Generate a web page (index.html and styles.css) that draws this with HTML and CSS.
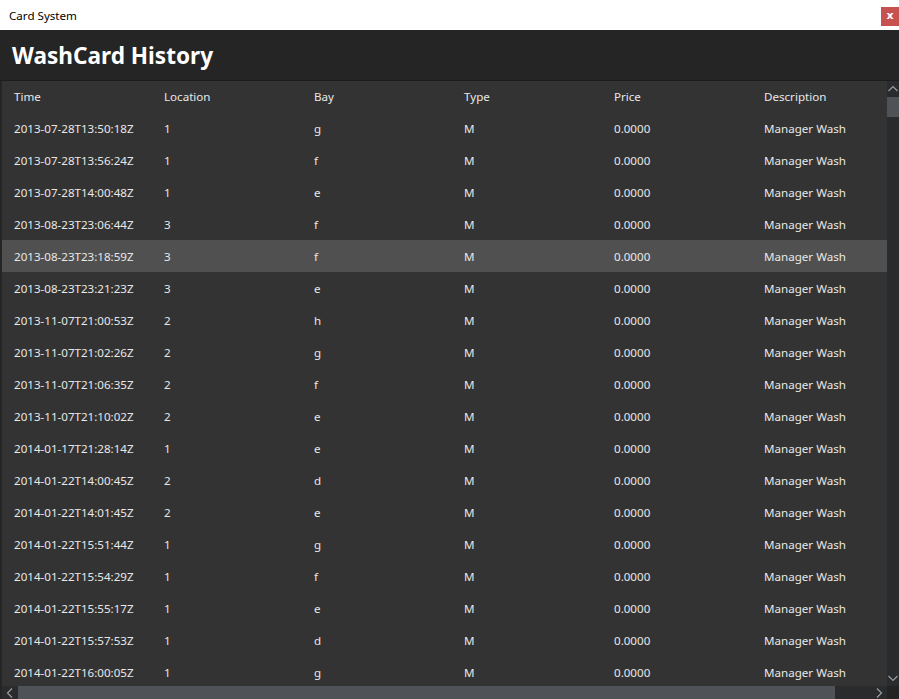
FILE: index.html
```html
<!DOCTYPE html>
<html>
<head>
<meta charset="utf-8">
<link rel="stylesheet" href="styles.css">
</head>
<body>
<div class="window">
  <div class="titlebar">
    <span class="wtitle">Card System</span>
    <span class="close">x</span>
  </div>
  <div class="header"><h1>WashCard History</h1></div>
  <div class="content">
    <div class="main">
      <div class="grid">
        <div class="row head"><span>Time</span><span>Location</span><span>Bay</span><span>Type</span><span>Price</span><span>Description</span></div>
        <div class="row"><span>2013-07-28T13:50:18Z</span><span>1</span><span>g</span><span>M</span><span>0.0000</span><span>Manager Wash</span></div>
        <div class="row"><span>2013-07-28T13:56:24Z</span><span>1</span><span>f</span><span>M</span><span>0.0000</span><span>Manager Wash</span></div>
        <div class="row"><span>2013-07-28T14:00:48Z</span><span>1</span><span>e</span><span>M</span><span>0.0000</span><span>Manager Wash</span></div>
        <div class="row"><span>2013-08-23T23:06:44Z</span><span>3</span><span>f</span><span>M</span><span>0.0000</span><span>Manager Wash</span></div>
        <div class="row sel"><span>2013-08-23T23:18:59Z</span><span>3</span><span>f</span><span>M</span><span>0.0000</span><span>Manager Wash</span></div>
        <div class="row"><span>2013-08-23T23:21:23Z</span><span>3</span><span>e</span><span>M</span><span>0.0000</span><span>Manager Wash</span></div>
        <div class="row"><span>2013-11-07T21:00:53Z</span><span>2</span><span>h</span><span>M</span><span>0.0000</span><span>Manager Wash</span></div>
        <div class="row"><span>2013-11-07T21:02:26Z</span><span>2</span><span>g</span><span>M</span><span>0.0000</span><span>Manager Wash</span></div>
        <div class="row"><span>2013-11-07T21:06:35Z</span><span>2</span><span>f</span><span>M</span><span>0.0000</span><span>Manager Wash</span></div>
        <div class="row"><span>2013-11-07T21:10:02Z</span><span>2</span><span>e</span><span>M</span><span>0.0000</span><span>Manager Wash</span></div>
        <div class="row"><span>2014-01-17T21:28:14Z</span><span>1</span><span>e</span><span>M</span><span>0.0000</span><span>Manager Wash</span></div>
        <div class="row"><span>2014-01-22T14:00:45Z</span><span>2</span><span>d</span><span>M</span><span>0.0000</span><span>Manager Wash</span></div>
        <div class="row"><span>2014-01-22T14:01:45Z</span><span>2</span><span>e</span><span>M</span><span>0.0000</span><span>Manager Wash</span></div>
        <div class="row"><span>2014-01-22T15:51:44Z</span><span>1</span><span>g</span><span>M</span><span>0.0000</span><span>Manager Wash</span></div>
        <div class="row"><span>2014-01-22T15:54:29Z</span><span>1</span><span>f</span><span>M</span><span>0.0000</span><span>Manager Wash</span></div>
        <div class="row"><span>2014-01-22T15:55:17Z</span><span>1</span><span>e</span><span>M</span><span>0.0000</span><span>Manager Wash</span></div>
        <div class="row"><span>2014-01-22T15:57:53Z</span><span>1</span><span>d</span><span>M</span><span>0.0000</span><span>Manager Wash</span></div>
        <div class="row"><span>2014-01-22T16:00:05Z</span><span>1</span><span>g</span><span>M</span><span>0.0000</span><span>Manager Wash</span></div>
      </div>
      <div class="vscroll">
        <div class="arrow"><svg width="12" height="8" viewBox="0 0 12 8"><path d="M1.5 6 L6 1.5 L10.5 6" fill="none" stroke="#9a9ea4" stroke-width="1.2"/></svg></div>
        <div class="vthumb"></div>
        <div class="vtrack"></div>
        <div class="arrow"><svg width="12" height="8" viewBox="0 0 12 8"><path d="M1.5 2 L6 6.5 L10.5 2" fill="none" stroke="#9a9ea4" stroke-width="1.2"/></svg></div>
      </div>
    </div>
    <div class="hscroll">
      <div class="harrow"><svg width="8" height="12" viewBox="0 0 8 12"><path d="M6 1.5 L1.5 6 L6 10.5" fill="none" stroke="#9a9ea4" stroke-width="1.2"/></svg></div>
      <div class="hthumb"></div>
      <div class="htrack"></div>
      <div class="harrow"><svg width="8" height="12" viewBox="0 0 8 12"><path d="M2 1.5 L6.5 6 L2 10.5" fill="none" stroke="#9a9ea4" stroke-width="1.2"/></svg></div>
      <div class="corner"></div>
    </div>
  </div>
</div>
</body>
</html>
```
FILE: styles.css
```css
* { box-sizing: border-box; }
html, body { margin: 0; padding: 0; }
body {
  width: 899px;
  height: 699px;
  overflow: hidden;
  font-family: "Noto Sans", "Open Sans", sans-serif;
  background: #252525;
}
.window {
  display: flex;
  flex-direction: column;
  width: 899px;
  height: 699px;
}
.titlebar {
  height: 30px;
  background: #ffffff;
  display: flex;
  align-items: center;
  justify-content: space-between;
  padding-left: 9px;
  flex: none;
}
.wtitle {
  font-size: 11.6px;
  color: #000;
}
.close {
  width: 18px;
  height: 19px;
  margin-top: 2px;
  background: #c75050;
  color: #fff;
  font-size: 11px;
  font-weight: bold;
  display: flex;
  align-items: center;
  justify-content: center;
  font-family: "DejaVu Sans", sans-serif;
  padding-bottom: 2px;
}
.header {
  height: 51px;
  flex: none;
  background: #252525;
  display: flex;
  align-items: center;
  padding-left: 12px;
  border-bottom: 1px solid #1c1c1c;
}
.header h1 {
  margin: 0;
  color: #ffffff;
  font-size: 22.6px;
  font-weight: bold;
  font-family: "Noto Sans", "Open Sans", sans-serif;
  margin-top: 0;
}
.content {
  flex: 1;
  display: flex;
  flex-direction: column;
  min-height: 0;
  padding-left: 2px;
  background: #252525;
}
.main {
  flex: 1;
  display: flex;
  min-height: 0;
}
.grid {
  flex: 1;
  overflow: hidden;
  background: #333333;
}
.row {
  display: grid;
  grid-template-columns: repeat(6, 150px);
  height: 32px;
  align-items: center;
  color: #e8e8e8;
  font-size: 11.6px;
  white-space: nowrap;
}
.row.head { height: 31px; }
.row span { padding-left: 12px; }
.row.sel { background: #505050; }
.vscroll {
  width: 12px;
  flex: none;
  display: flex;
  flex-direction: column;
  background: #2a2b2d;
}
.arrow {
  height: 16px;
  display: flex;
  align-items: center;
  justify-content: center;
  flex: none;
}
.vthumb {
  height: 20px;
  flex: none;
  background: #4f5257;
}
.vtrack { flex: 1; }
.hscroll {
  height: 13px;
  flex: none;
  display: flex;
  background: #2a2b2d;
}
.harrow {
  width: 16px;
  display: flex;
  align-items: center;
  justify-content: center;
  flex: none;
}
.hthumb {
  width: 817px;
  flex: none;
  background: #4f5257;
}
.htrack { flex: 1; }
.corner {
  width: 12px;
  flex: none;
  background: #232323;
}
```
